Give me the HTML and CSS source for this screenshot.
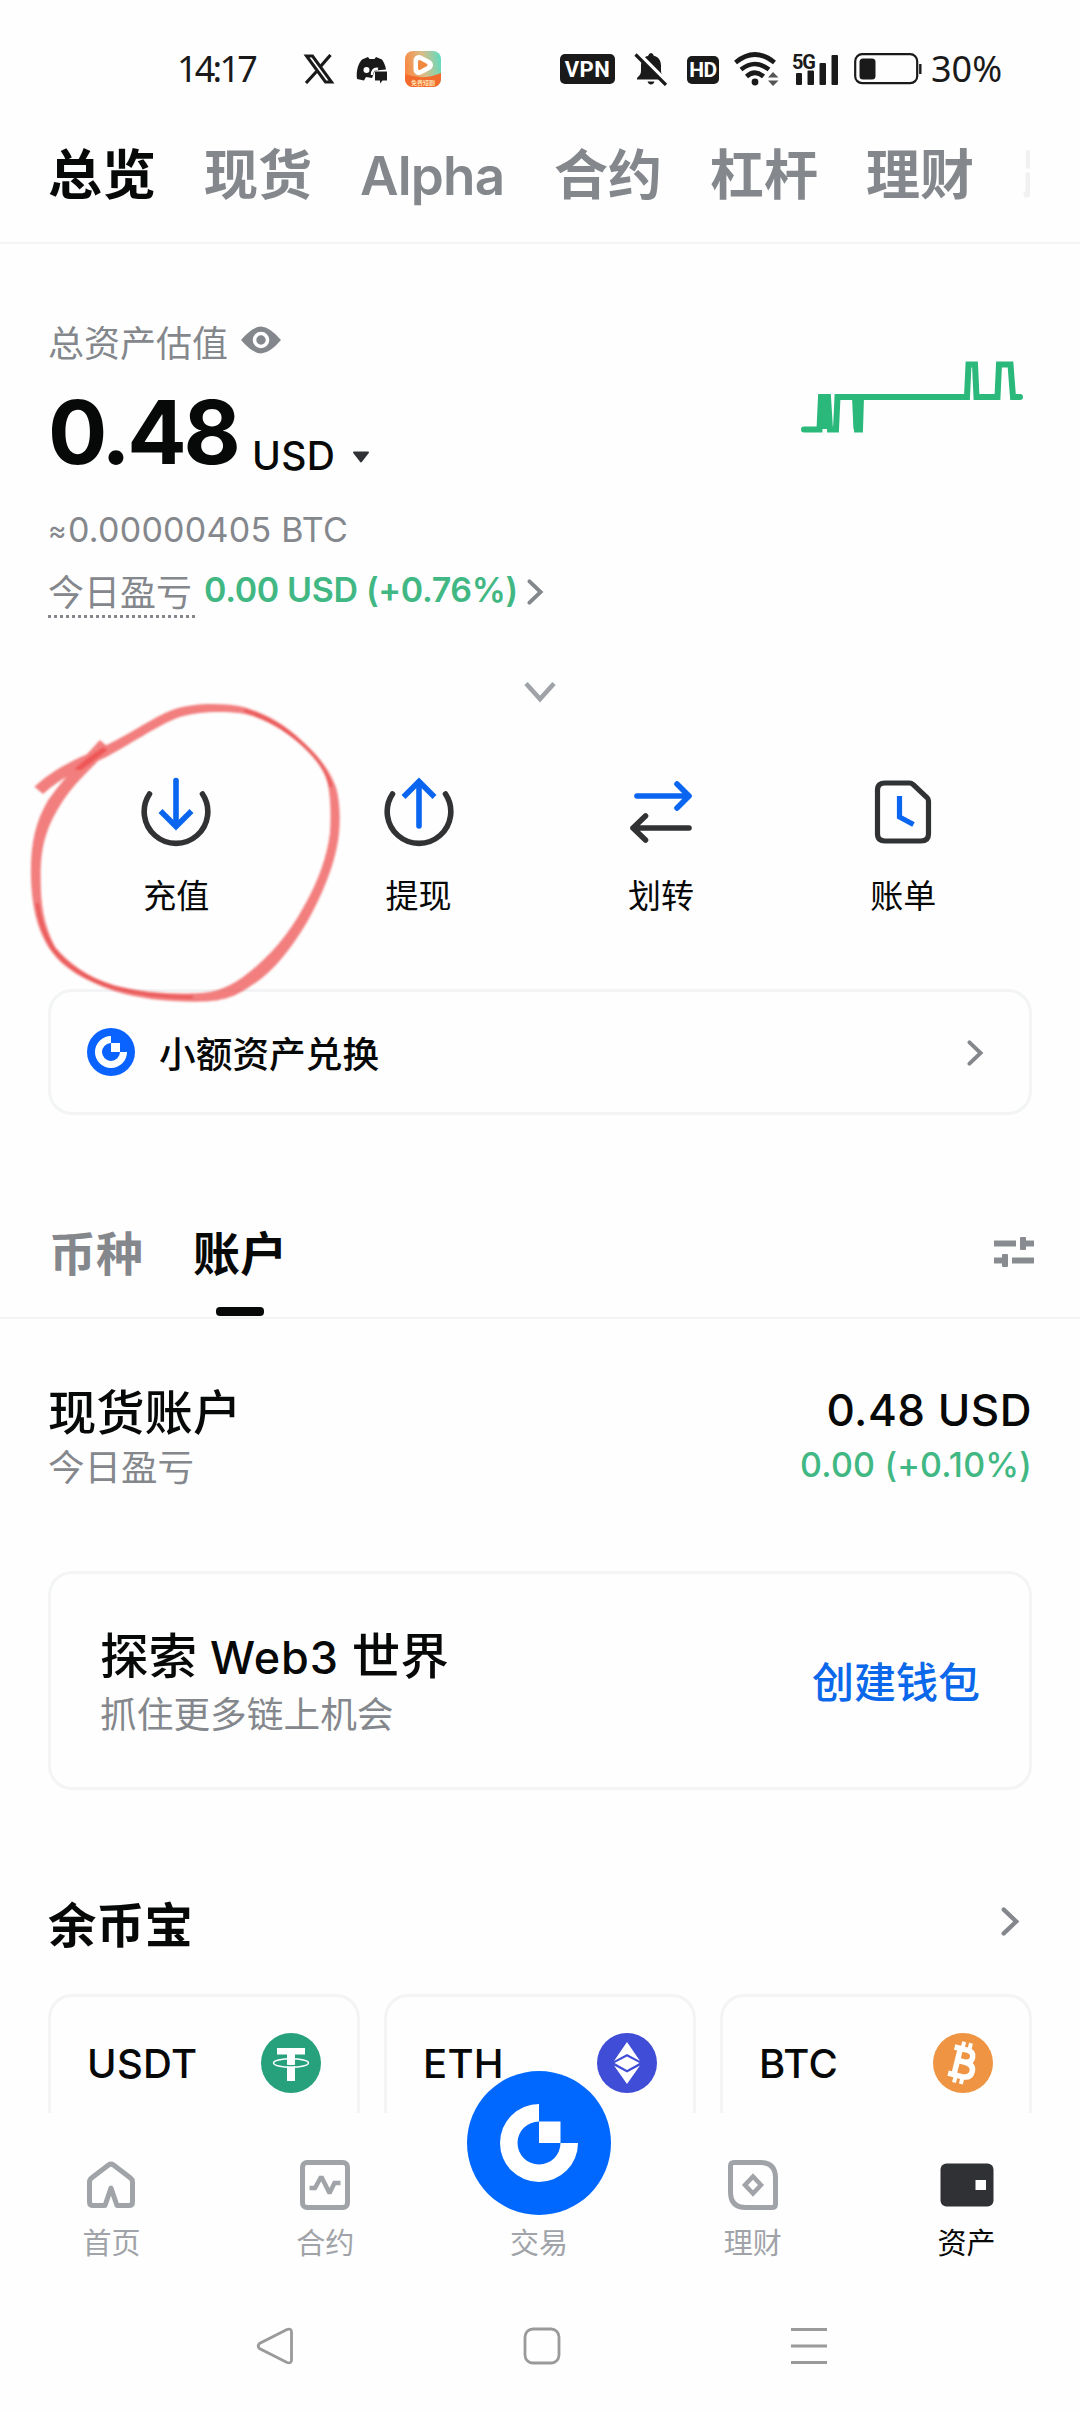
FILE: index.html
```html
<!DOCTYPE html>
<html lang="zh-CN">
<head>
<meta charset="utf-8">
<title>资产总览</title>
<link rel="stylesheet" href="styles.css">
</head>
<body>
<svg class="defs" width="0" height="0" aria-hidden="true">
  <symbol id="gate" viewBox="0 0 144 144">
    <circle cx="72" cy="72" r="72" fill="currentColor"/>
    <path fill="#fff" d="M72 33A39 39 0 1 0 111 72H93.500A21.500 21.500 0 1 1 72 50.500ZM72 50.500H93.500V72H72Z"/>
  </symbol>
  <symbol id="gate-small" viewBox="0 0 48 48">
    <circle cx="24" cy="24" r="24" fill="currentColor"/>
    <path fill="#fff" d="M24 8A16 16 0 1 0 40 24H33A9 9 0 1 1 24 15ZM24 15H33V24H24Z"/>
  </symbol>
  <symbol id="chev" viewBox="0 0 18 28">
    <path d="M2.500 2.500 14.500 14 2.500 25.500" fill="none" stroke="currentColor" stroke-width="4.200" stroke-linecap="round"/>
  </symbol>
</svg>
<div class="screen">
  <header class="status">
    <span class="clock">14:17</span>
    <svg class="st-x" width="32" height="30" viewBox="0 0 32 30"><path d="M3.500 2H9.500L28.500 28H22.500Z" fill="none" stroke="#1a1a1a" stroke-width="3"/><path d="M27.500 1 17.500 12.500M13.500 17.500 3 29" stroke="#1a1a1a" stroke-width="3.200"/></svg>
    <svg class="st-discord" width="32" height="28" viewBox="0 0 32 28"><path fill="#1a1a1a" d="M1 23C0 15 2 8 6 3.500L12 1l1.500 2h5L20 1l6 2.500c2 3 3.500 6 4 10L19 14.500 16 22 10 21 8 24.500Z"/><circle cx="10.500" cy="14" r="3" fill="#fff"/><path d="M16 19c0-4 2-7 6-6" stroke="#fff" stroke-width="2.500" fill="none"/><path fill="#1a1a1a" d="M19 15.500h12v9h-4.500L24 27.500v-3h-5Z"/></svg>
    <svg class="st-app" width="36" height="36" viewBox="0 0 36 36"><defs><linearGradient id="ag" x1="0" y1=".35" x2="1" y2=".2"><stop offset="0" stop-color="#f98a45"/><stop offset=".5" stop-color="#d9bd87"/><stop offset="1" stop-color="#5fdcc0"/></linearGradient></defs><rect width="36" height="36" rx="8" fill="url(#ag)"/><path d="M0 23Q18 30 36 22V28a8 8 0 0 1-8 8H8a8 8 0 0 1-8-8Z" fill="#f26a2c"/><path d="M14 9.500v9L22.500 14Z" fill="#fff" stroke="#fff" stroke-width="11" stroke-linejoin="round"/><path d="M14.500 10.500v7L21 14Z" fill="#f0893e" stroke="#f0893e" stroke-width="3" stroke-linejoin="round"/><text x="18" y="33.500" text-anchor="middle" class="app-txt">免费短剧</text></svg>
    <span class="badge vpn">VPN</span>
    <svg class="st-bell" width="34" height="34" viewBox="0 0 34 34"><path fill="#1a1a1a" d="M3 26c3-3 4-4 4-8v-4C7 8 10 4.500 14 4q1-3 3-3t3 3c4 .5 7 4 7 10v4c0 4 1 5 4 8v1.500H3ZM13.500 29.500h7q-1 3-3.500 3t-3.500-3Z"/><path d="M4 1 34 31" stroke="#fff" stroke-width="4"/><path d="M1.500 2.500 32 33" stroke="#1a1a1a" stroke-width="3.200"/></svg>
    <span class="badge hd">HD</span>
    <svg class="st-wifi" width="46" height="34" viewBox="0 0 46 34"><g fill="none" stroke="#1a1a1a" stroke-width="4.600"><path d="M1.500 10.500Q21 -5.500 40.500 10.500"/><path d="M7 17.500Q21 6.500 35 17.500"/><path d="M12.500 24.500Q21 17 29.500 24.500"/></g><circle cx="21" cy="30" r="3.400" fill="#1a1a1a"/><path fill="#555" d="M34 25.500 39 20l5.500 5.500ZM34 28.500h10.500L39 34Z"/></svg>
    <svg class="st-sig" width="48" height="34" viewBox="0 0 48 34"><text x="0" y="17" class="g5">5G</text><g fill="#1a1a1a"><rect x="4" y="21" width="6" height="12" rx="1"/><rect x="15.500" y="18.500" width="6.500" height="14.500" rx="1"/><rect x="27.500" y="11" width="6.500" height="22" rx="1"/><rect x="39.500" y="3" width="6.500" height="30" rx="1"/></g></svg>
    <svg class="st-bat" width="68" height="32" viewBox="0 0 68 32"><rect x="1.200" y="1.200" width="62" height="29" rx="7" fill="none" stroke="#1a1a1a" stroke-width="2.200"/><rect x="5.500" y="5.500" width="16" height="21" rx="3.500" fill="#1a1a1a"/><path d="M66.300 11v10" stroke="#1a1a1a" stroke-width="2.400"/></svg>
    <span class="pct">30%</span>
  </header>

  <nav class="tabs"><span class="on">总览</span><span>现货</span><span class="lat">Alpha</span><span>合约</span><span>杠杆</span><span>理财</span><span class="fade">跟</span></nav>

  <section class="summary">
    <div class="sum-left">
      <div class="est"><span>总资产估值</span><svg width="42" height="28" viewBox="0 0 42 28"><path fill="#84878c" d="M1 14Q12 1 21 .5 30 1 41 14 30 27 21 27.500 12 27 1 14Z"/><circle cx="21" cy="14" r="6.500" fill="none" stroke="#fefefe" stroke-width="3.600"/></svg></div>
      <div class="total"><b>0.48</b><span>USD</span><svg width="18" height="12" viewBox="0 0 18 12"><path d="M2 1.500H16L9 10.500Z" fill="#303236" stroke="#303236" stroke-width="2" stroke-linejoin="round"/></svg></div>
      <div class="btc"><span>≈</span>0.00000405 BTC</div>
      <div class="pnl"><span class="pnl-l">今日盈亏</span><span class="pnl-v">0.00 USD (+0.76%)</span><svg width="17" height="26"><use href="#chev"/></svg></div>
    </div>
    <svg class="spark" width="226" height="80" viewBox="798 358 226 80"><g fill="none" stroke="#2ab87b" stroke-width="6"><path stroke-linecap="round" d="M804 429.500H819.500L821 397H828L830 429.500H836L837.500 397H856L857 429.500H860L861 397H967L968.500 364.500H975L976.500 397H997.500L999 364.500H1010.500L1013 397H1020"/><path d="M824.500 397V429M855 397 856.500 429"/></g></svg>
  </section>
  <div class="expand"><svg width="34" height="24" viewBox="0 0 34 24"><path d="M3 3.500 17 19 31 3.500" fill="none" stroke="#9fa2a7" stroke-width="4.600"/></svg></div>

  <section class="actions">
    <div class="act"><svg width="72" height="72" viewBox="0 0 72 72" fill="none" stroke-width="5.600" stroke-linecap="round"><path d="M9.500 18A31.800 31.800 0 1 0 62.500 18" stroke="#303234"/><path d="M36 4.500V49" stroke="#0a66f0"/><path d="M20.500 35 36 50.500 51.500 35" stroke="#0a66f0" stroke-linecap="butt"/></svg><span>充值</span></div>
    <div class="act"><svg width="72" height="72" viewBox="0 0 72 72" fill="none" stroke-width="5.600" stroke-linecap="round"><path d="M9.500 18A31.800 31.800 0 1 0 62.500 18" stroke="#303234"/><path d="M36 6V50" stroke="#0a66f0"/><path d="M20.500 21 36 5.500 51.500 21" stroke="#0a66f0" stroke-linecap="butt"/></svg><span>提现</span></div>
    <div class="act"><svg width="72" height="72" viewBox="0 0 72 72" fill="none" stroke-width="5.600" stroke-linecap="round" stroke-linejoin="round"><path d="M12 20H64M52 8 64 20 52 32" stroke="#0a66f0"/><path d="M64 52H8M20.500 40 8 52 20.500 64" stroke="#303234"/></svg><span>划转</span></div>
    <div class="act"><svg width="72" height="72" viewBox="0 0 72 72" fill="none" stroke-width="5.200"><path d="M18 7H42.500Q44.500 7 46 8.500L60 21.500Q61.500 23 61.500 25V58Q61.500 65 54 65H18Q10.500 65 10.500 58V14Q10.500 7 18 7Z" stroke="#303234"/><path d="M32.500 20V41L46.500 48.500" stroke="#0a66f0"/></svg><span>账单</span></div>
  </section>

  <section class="card convert"><svg class="logo" width="48" height="48"><use href="#gate-small"/></svg><span>小额资产兑换</span><svg class="chev" width="17" height="26"><use href="#chev"/></svg></section>

  <nav class="subtabs"><span>币种</span><span class="on">账户</span><svg width="42" height="30" viewBox="0 0 42 30" fill="#888b90"><rect x="1" y="3.500" width="22" height="6"/><rect x="27" width="6" height="13" rx="1"/><rect x="32" y="3.500" width="9" height="6"/><rect x="1" y="20.500" width="9" height="6"/><rect x="9" y="17" width="6" height="13" rx="1"/><rect x="19" y="20.500" width="22" height="6"/></svg></nav>

  <section class="account">
    <div><div class="acc-name">现货账户</div><div class="acc-sub">今日盈亏</div></div>
    <div class="right"><div class="acc-val">0.48 USD</div><div class="acc-pnl">0.00 (+0.10%)</div></div>
  </section>

  <section class="card web3">
    <div><div class="w-title">探索 <span>Web3</span> 世界</div><div class="w-sub">抓住更多链上机会</div></div>
    <a class="create">创建钱包</a>
  </section>

  <section class="earn-head"><h2>余币宝</h2><svg width="19" height="29"><use href="#chev"/></svg></section>
  <section class="coins">
    <div class="coin"><span>USDT</span><svg width="60" height="60" viewBox="0 0 60 60"><circle cx="30" cy="30" r="30" fill="#26a17b"/><path fill="#fff" d="M16 15H44V21.500H34V48H26V21.500H16Z"/><ellipse cx="30" cy="30" rx="17.500" ry="4.200" fill="none" stroke="#fff" stroke-width="1.400"/><path d="M26 32.300Q30 33 34 32.300" stroke="#26a17b" stroke-width="1.200" fill="none"/></svg></div>
    <div class="coin"><span>ETH</span><svg width="60" height="60" viewBox="0 0 60 60"><circle cx="30" cy="30" r="30" fill="#404dd6"/><path fill="#fff" d="M30 9 43 28 30 21 17 28ZM30 23.500 42.500 30 30 37 17.500 30ZM17 32.500 30 39.500 43 32.500 30 51Z"/></svg></div>
    <div class="coin"><span>BTC</span><svg width="60" height="60" viewBox="0 0 60 60"><circle cx="30" cy="30" r="30" fill="#ee9442"/><g transform="rotate(14 30 30)" fill="none" stroke="#fff" stroke-width="5.500"><path d="M18 16.500H31Q38 16.500 38 22.500T31 28.700H24M31 28.700Q41 28.700 41 36T32 43.500H18M24 16V44"/><path stroke-width="4" d="M26 9V16M33 9V16M26 44V51M33 44V51"/></g></svg></div>
  </section>

  <footer class="nav">
    <div class="item"><svg width="54" height="54" viewBox="0 0 54 54" fill="none" stroke="#a0a3a8" stroke-width="5" stroke-linejoin="round"><path d="M21 47.500H9Q5.500 47.500 5.500 44V24Q5.500 21.500 7.500 20L24.500 7Q27 5.300 29.500 7L46.500 20Q48.500 21.500 48.500 24V44Q48.500 47.500 45 47.500H33L27 30Z"/></svg><span>首页</span></div>
    <div class="item"><svg width="54" height="54" viewBox="0 0 54 54" fill="none" stroke="#a0a3a8" stroke-width="5"><rect x="4.500" y="4.500" width="45" height="45" rx="4.500"/><path d="M11.500 30H17L22.500 20H24L31 34H32L36.500 25H42.500" stroke-width="4.500"/></svg><span>合约</span></div>
    <div class="item trade"><svg width="144" height="144"><use href="#gate"/></svg><span>交易</span></div>
    <div class="item"><svg width="54" height="54" viewBox="0 0 54 54" fill="none" stroke="#a0a3a8" stroke-width="5"><path d="M8 4.500H34Q49.500 4.500 49.500 20V46Q49.500 49.500 46 49.500H20Q4.500 49.500 4.500 34V8Q4.500 4.500 8 4.500Z"/><path d="M27 18.500 35 27 27 35.500 19 27Z" stroke-width="4.500"/></svg><span>理财</span></div>
    <div class="item active"><svg width="54" height="54" viewBox="0 0 54 54"><rect x=".5" y="5.500" width="53" height="43" rx="6" fill="#303135"/><rect x="35.500" y="22" width="10.500" height="10" fill="#fff"/></svg><span>资产</span></div>
  </footer>
  <div class="sysnav">
    <svg width="38" height="38" viewBox="0 0 38 38"><path d="M31 2.500 3.500 16.500Q1 19 3.500 21.500L31 35.500Q35.500 37 35.500 33V5Q35.500 1 31 2.500Z"/></svg>
    <svg width="38" height="38" viewBox="0 0 38 38"><rect x="2" y="2" width="34" height="34" rx="8"/></svg>
    <svg width="38" height="38" viewBox="0 0 38 38"><path d="M1 2.500H37M1 19H37M1 35.500H37"/></svg>
  </div>

  <svg class="mark" width="540" height="440" viewBox="0 0 1568 1320" preserveAspectRatio="none">
    <defs><filter id="soft"><feGaussianBlur stdDeviation="3"/></filter></defs>
    <g filter="url(#soft)">
    <path fill="#ee5656" fill-opacity=".76" d="M100 290C170 225 230 205 310 165C390 125 440 85 500 60C560 38 650 38 710 52C800 80 850 125 890 165C940 215 960 250 975 290C990 340 988 410 982 450C970 530 935 615 895 690C850 770 792 848 735 883C680 925 640 935 570 935C480 935 400 925 330 902C240 870 180 830 150 785C105 720 92 640 90 560C88 470 100 400 140 330C180 270 230 220 290 150L318 175C270 235 220 270 175 345C130 420 118 480 118 560C118 640 125 700 160 770C200 820 250 858 330 885C400 905 480 912 570 910C630 908 670 890 720 850C780 800 835 740 882 650C922 580 950 500 958 430C962 370 960 300 945 255C930 220 910 195 870 160C810 110 760 82 700 70C640 62 570 65 520 82C460 105 400 150 310 200C240 235 180 260 125 312Z"/>
    <path fill="#ee4444" fill-opacity=".65" d="M215 238Q250 205 300 172L312 180Q270 215 235 240Z"/>
    <path fill="none" stroke="#e23b3b" stroke-opacity=".55" stroke-width="9" d="M710 61C800 90 850 135 885 170C935 220 948 250 961 290M108 640C115 700 135 745 155 778C190 825 245 864 330 893C400 912 480 922 560 922"/>
    </g>
  </svg>
</div>
</body>
</html>
```
FILE: styles.css
```css
* { box-sizing: border-box; }
body { margin: 0; background: #fefefe; }
.defs { position: absolute; }
svg { display: block; flex: none; }
.screen {
  position: relative;
  width: 1080px; height: 2412px;
  display: flex; flex-direction: column;
  overflow: hidden;
  background: #fefefe; color: #070808;
  font-family: "Inter", "Noto Sans CJK SC", sans-serif;
  white-space: nowrap;
}
.screen > * { flex: none; }

/* system status bar */
.status { height: 138px; display: flex; align-items: center; padding-left: 177px; color: #1a1a1a; }
.clock, .pct { font-family: "Noto Sans", sans-serif; font-size: 36px; line-height: 40px; }
.clock { width: 126px; letter-spacing: -2.800px; }
.st-discord { margin-left: 21px; margin-top: 2px; }
.st-app { margin-left: 17px; }
.badge {
  display: flex; align-items: center; justify-content: center;
  background: #1a1a1a; color: #fff; border-radius: 5px;
  font-family: "Roboto", sans-serif; font-weight: 700;
}
.vpn { margin-left: 119px; width: 55px; height: 30px; font-size: 22px; letter-spacing: .5px; }
.st-bell { margin-left: 19px; }
.hd { margin-left: 19px; margin-top: 2px; width: 32px; height: 28px; font-size: 21px; letter-spacing: -.5px; }
.st-wifi { margin-left: 15px; }
.st-sig { margin-left: 12px; overflow: visible; }
.st-bat { margin-left: 14px; }
.pct { margin-left: 9px; }
.g5 { font: 700 20px "Roboto", sans-serif; letter-spacing: -1.200px; fill: #1a1a1a; }
.app-txt { font: 700 6px "Noto Sans CJK SC", sans-serif; fill: #ffe1b0; }

/* top tabs */
.tabs {
  height: 106px; padding: 11px 0 0 48px;
  display: flex; gap: 48px;
  border-bottom: 2px solid #f3f4f5;
  font-size: 54px; line-height: 54px; font-weight: 700; color: #84878c;
}
.tabs .on { color: #070808; }
.tabs .lat { font-weight: 600; width: 146px; font-size: 53px; letter-spacing: -.8px; }
.tabs .fade { width: 8px; overflow: hidden; opacity: .1; }

/* balance summary */
.summary { display: flex; justify-content: space-between; padding: 78px 56px 0 48px; }
.est { display: flex; gap: 12px; font-size: 36px; line-height: 44px; color: #84878c; }
.est svg { margin-top: 4px; }
.total { display: flex; align-items: flex-end; margin-top: 22px; height: 88px; }
.total b { font-size: 88px; line-height: 88px; font-weight: 700; letter-spacing: -3.400px; width: 204px; }
.total span { font-size: 39px; line-height: 40px; font-weight: 500; letter-spacing: .3px; }
.total svg { margin: 0 0 13px 17px; }
.btc { margin-top: 34px; height: 40px; font-size: 34px; line-height: 40px; color: #84878c; letter-spacing: .25px; }
.btc span { display: inline-block; width: 20px; font-size: 28px; line-height: 36px; vertical-align: 2px; }
.pnl { display: flex; margin-top: 21px; height: 47px; line-height: 44px; }
.pnl-l { width: 147px; font-size: 36px; color: #84878c; border-bottom: 3px dotted #84878c; }
.pnl-v { margin: -3px 0 0 9px; width: 313px; font-size: 34px; font-weight: 600; letter-spacing: -.35px; color: #41b883; }
.pnl svg { margin: 8px 0 0 10px; color: #84878c; }
.spark { margin-top: 36px; }
.expand { height: 95px; padding-top: 62px; display: flex; justify-content: center; }

/* quick actions */
.actions { display: grid; grid-template-columns: repeat(4, 242.400px); padding: 63px 0 0 55px; }
.act { display: flex; flex-direction: column; align-items: center; gap: 28px; }
.act span { font-size: 33px; line-height: 40px; }

.card { margin: 0 48px; border: 3px solid #f3f4f5; border-radius: 24px; display: flex; }
.convert { margin-top: 73px; height: 126px; align-items: center; padding: 0 45px 0 36px; font-size: 36.700px; font-weight: 500; }
.convert .logo { color: #0a62ff; margin-right: 24px; }
.chev { margin-left: auto; margin-top: 2px; color: #84878c; }

/* asset tabs */
.subtabs {
  margin-top: 74px; height: 130px; padding: 0 45px 0 49px;
  display: flex; gap: 50px; border-bottom: 2px solid #f3f4f5;
  font-size: 47px; line-height: 130px; font-weight: 600; color: #84878c;
}
.subtabs .on { color: #070808; display: flex; flex-direction: column; align-items: center; height: 128px; }
.subtabs .on::after { content: ""; flex: none; width: 48px; height: 9px; margin-top: -12px; border-radius: 4px; background: #070808; }
.subtabs svg { margin: 48px 0 0 auto; }

.account { display: flex; justify-content: space-between; padding: 66px 48px 0 48px; }
.acc-name { font-size: 48.300px; line-height: 56px; font-weight: 500; }
.acc-sub { margin-top: 7px; font-size: 36.500px; line-height: 40px; color: #84878c; }
.right { text-align: right; }
.acc-val { font-size: 44px; line-height: 50px; font-weight: 500; letter-spacing: .5px; }
.acc-pnl { margin-top: 10px; font-size: 34px; line-height: 40px; font-weight: 500; letter-spacing: .2px; color: #41b883; }

.web3 { margin-top: 83px; height: 219px; padding: 55px 49px 0; justify-content: space-between; }
.w-title { font-size: 48.500px; line-height: 56px; font-weight: 500; }
.w-title span { font-size: 45px; letter-spacing: .9px; }
.w-sub { margin-top: 9px; font-size: 36.700px; line-height: 40px; color: #84878c; }
.create { margin-top: 26px; font-size: 42px; line-height: 56px; font-weight: 500; color: #0b68ea; }

.earn-head { display: flex; justify-content: space-between; align-items: center; margin-top: 103px; height: 64px; padding: 0 60px 0 48px; color: #84878c; }
.earn-head h2 { margin: 2px 0 0; font-size: 48.300px; line-height: 64px; font-weight: 700; color: #070808; }
.earn-head svg { margin-bottom: 8px; }
.coins { display: grid; grid-template-columns: repeat(3, 312px); gap: 24px; padding-left: 48px; margin-top: 37px; height: 119px; overflow: hidden; }
.coin { height: 200px; border: 3px solid #f3f4f5; border-radius: 24px; padding: 36px 36px 0; display: flex; justify-content: space-between; font-size: 40px; line-height: 61px; font-weight: 500; letter-spacing: .3px; }

/* bottom navigation */
.nav { height: 187px; display: grid; grid-template-columns: repeat(5, 213.800px); padding: 45px 0 0 4.500px; color: #a0a3a8; }
.item { display: flex; flex-direction: column; align-items: center; gap: 12px; font-size: 29px; line-height: 40px; }
.item.active { color: #070808; }
.trade { margin-top: -87px; gap: 9px; }
.trade svg { color: #0068ff; }
.sysnav { display: flex; padding: 27px 0 0 256px; gap: 229px; }
.sysnav svg { fill: none; stroke: #9a9a9a; stroke-width: 2.800; }

.mark { position: absolute; left: 0; top: 690px; }
```
